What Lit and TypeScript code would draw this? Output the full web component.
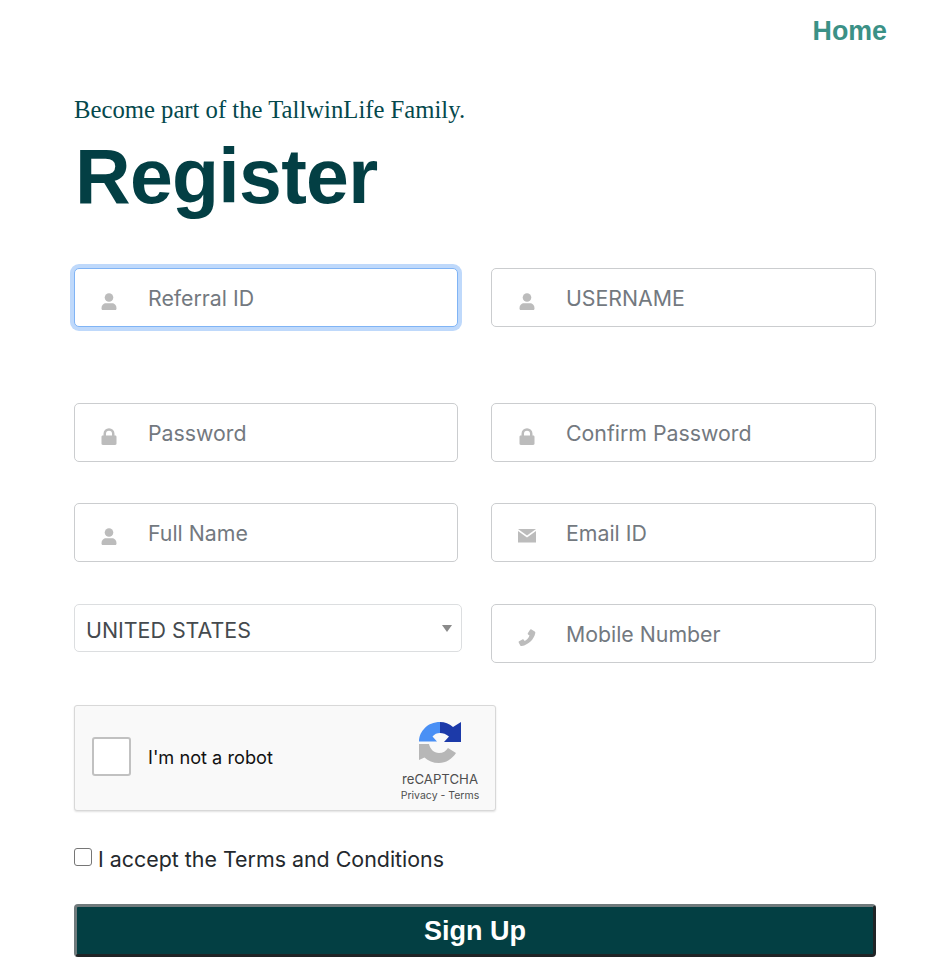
import { LitElement, html, css, svg } from "lit";
import { customElement } from "lit/decorators.js";

const icons: Record<string, unknown> = {
  user: svg`<circle cx="9" cy="4.500" r="4.300"/><path d="M1.500 15.500c0-3.800 2.400-5.300 4.300-5.300h6.400c1.900 0 4.300 1.500 4.300 5.300 0 .9-.4 1.500-1.200 1.500H2.700c-.8 0-1.200-.6-1.200-1.500z"/>`,
  lock: svg`<path fill-rule="evenodd" d="M3.500 7.500V5.700a5.500 5.500 0 0 1 11 0v1.800h.7c.6 0 1.300.5 1.300 1.300v7c0 .7-.6 1.200-1.300 1.200H2.800c-.7 0-1.300-.5-1.300-1.200v-7c0-.8.7-1.300 1.300-1.300zM6 7.500h6V5.700a3 3 0 0 0-6 0z"/>`,
  mail: svg`<path d="M0 1h18L9 7.500z"/><path d="M0 3V14.500h18V3L9 9.500z"/>`,
  phone: svg`<path d="M13.500 .5l3.200 2c.5.300.7.800.6 1.400C16 10.500 10.500 15.500 3.800 17c-.6.100-1.200-.1-1.500-.6L.8 13.700c-.3-.5-.2-1.100.3-1.400l3.200-1.900c.5-.3 1-.2 1.400.3l1 1.300c2.200-1.100 4-3.100 4.800-5.400L10.100 5.500c-.4-.3-.5-.9-.3-1.300L11.900 .9c.3-.5 1-.7 1.600-.4z"/>`,
};

@customElement("app-root")
export class AppRoot extends LitElement {
  static styles = css`
    :host {
      display: block;
      width: 942px;
      height: 965px;
      overflow: hidden;
      background: #fff;
      box-sizing: border-box;
      font-family: Inter, "Liberation Sans", sans-serif;
    }
    .page { padding: 16px 55px 0 74px; display: flex; flex-direction: column; }
    .nav { display: flex; justify-content: flex-end; }
    .home {
      font: 700 26.800px/30px "Liberation Sans", sans-serif;
      color: #3b9186;
      text-decoration: none;
    }
    .tag {
      margin: 48px 0 0;
      font: 24.700px/32px "Liberation Serif", serif;
      color: #04484c;
    }
    h1 {
      margin: 8px 0 0 1px;
      font: 700 77px/84px "Liberation Sans", sans-serif;
      letter-spacing: -0.7px;
      color: #033f44;
    }
    .row { display: grid; grid-template-columns: 384px 385px; column-gap: 33px; align-items: start; }
    .row > .field:last-child { padding-left: 1px; }
    .r1 { margin-top: 50px; }
    .r2 { margin-top: 76px; }
    .r3 { margin-top: 41px; }
    .r4 { margin-top: 42px; }
    .field {
      height: 59px;
      box-sizing: border-box;
      border: 1.500px solid #cbcdcf;
      border-radius: 5px;
      display: flex;
      align-items: center;
      background: #fff;
    }
    .field.focus {
      border-color: #80b4f5;
      box-shadow: 0 0 0 4px #bfd9fb;
    }
    .field svg { width: 18px; height: 17px; margin: 7px 0 0 25px; flex: none; fill: #bcbcbc; }
    .field .ph {
      margin-left: 30px;
      font-size: 21.300px;
      color: #73797f;
    }
    .select {
      width: 388px;
      height: 48px;
      box-sizing: border-box;
      border: 1.500px solid #dcdee0;
      border-radius: 5px;
      display: flex;
      align-items: center;
      justify-content: space-between;
      padding: 3px 9px 0 11px;
      font-size: 21.400px;
      color: #454a4e;
      background: #fff;
    }
    .caret {
      width: 0; height: 0;
      margin-top: -3px;
      border-left: 5px solid transparent;
      border-right: 5px solid transparent;
      border-top: 7px solid #8a8a8a;
    }
    .captcha {
      margin-top: 42px;
      width: 422px;
      height: 106px;
      box-sizing: border-box;
      background: #f9f9f9;
      border: 1px solid #d8d8d8;
      border-radius: 3px;
      box-shadow: 0 1px 2px rgba(0,0,0,.12);
      display: flex;
      align-items: center;
      padding: 0 15px 0 17px;
      color: #111;
    }
    .box {
      width: 39px; height: 39px;
      box-sizing: border-box;
      margin-top: -4px;
      background: #fff;
      border: 2.500px solid #c1c1c1;
      border-radius: 3px;
    }
    .robot { margin-left: 17px; flex: 1; font-size: 18.200px; margin-top: -2px; }
    .brand { display: flex; flex-direction: column; align-items: center; width: 80px; margin-top: 9px; }
    .brand svg { width: 43px; height: 42px; }
    .brand .rc { margin-top: 7px; font-size: 13.200px; line-height: 17px; color: #4f4f4f; }
    .brand .pt { font-size: 10.500px; line-height: 15px; color: #4f4f4f; white-space: nowrap; }
    .accept { margin-top: 32px; display: flex; align-items: center; font-size: 21.400px; line-height: 32px; color: #24292d; }
    .cb {
      width: 18px; height: 18px;
      box-sizing: border-box;
      border: 1.500px solid #767676;
      border-radius: 3px;
      margin-right: 6px;
      margin-top: -5px;
      background: #fff;
    }
    .btn {
      margin-top: 29px;
      height: 53px;
      box-sizing: border-box;
      width: 802px;
      border: 3px solid;
      border-color: #707a7c #1f2426 #1f2426 #707a7c;
      border-radius: 4px;
      background: #033f43;
      color: #fff;
      font: 700 27px "Liberation Sans", sans-serif;
      padding: 2px 0 0;
    }
  `;

  private field(icon: string, label: string, focus = false) {
    return html`<div class="field ${focus ? "focus" : ""}">
      <svg viewBox="0 0 18 17">${icons[icon]}</svg>
      <span class="ph">${label}</span>
    </div>`;
  }

  render() {
    return html`<div class="page">
      <div class="nav"><a class="home" href="#">Home</a></div>
      <p class="tag">Become part of the TallwinLife Family.</p>
      <h1>Register</h1>
      <div class="row r1">${this.field("user", "Referral ID", true)}${this.field("user", "USERNAME")}</div>
      <div class="row r2">${this.field("lock", "Password")}${this.field("lock", "Confirm Password")}</div>
      <div class="row r3">${this.field("user", "Full Name")}${this.field("mail", "Email ID")}</div>
      <div class="row r4">
        <div class="select"><span>UNITED STATES</span><span class="caret"></span></div>
        ${this.field("phone", "Mobile Number")}
      </div>
      <div class="captcha">
        <div class="box"></div>
        <div class="robot">I'm not a robot</div>
        <div class="brand">
          <svg viewBox="0 0 43 42">
            <path fill="#1c3aa9" d="M21 0C26 0 30 1.500 34 5L42 0V20H25L30 14.500C27 12 24 11 21 11z"/>
            <path fill="#4a90f5" d="M21 0V11C18 11 15.500 12 13.500 14.500L18 19.500H0C0 16 1 11 5 7C9 2 15 0 21 0z"/>
            <path fill="#b7b7b7" d="M0 22H10C11 27 15 31 20 31C24 31 27 29 29 26L37 31C33 37 27 41 20 41C14 41 9 39 5.500 35.500L0 38z"/>
          </svg>
          <div class="rc">reCAPTCHA</div>
          <div class="pt">Privacy - Terms</div>
        </div>
      </div>
      <div class="accept"><span class="cb"></span>I accept the Terms and Conditions</div>
      <button class="btn">Sign Up</button>
    </div>`;
  }
}
